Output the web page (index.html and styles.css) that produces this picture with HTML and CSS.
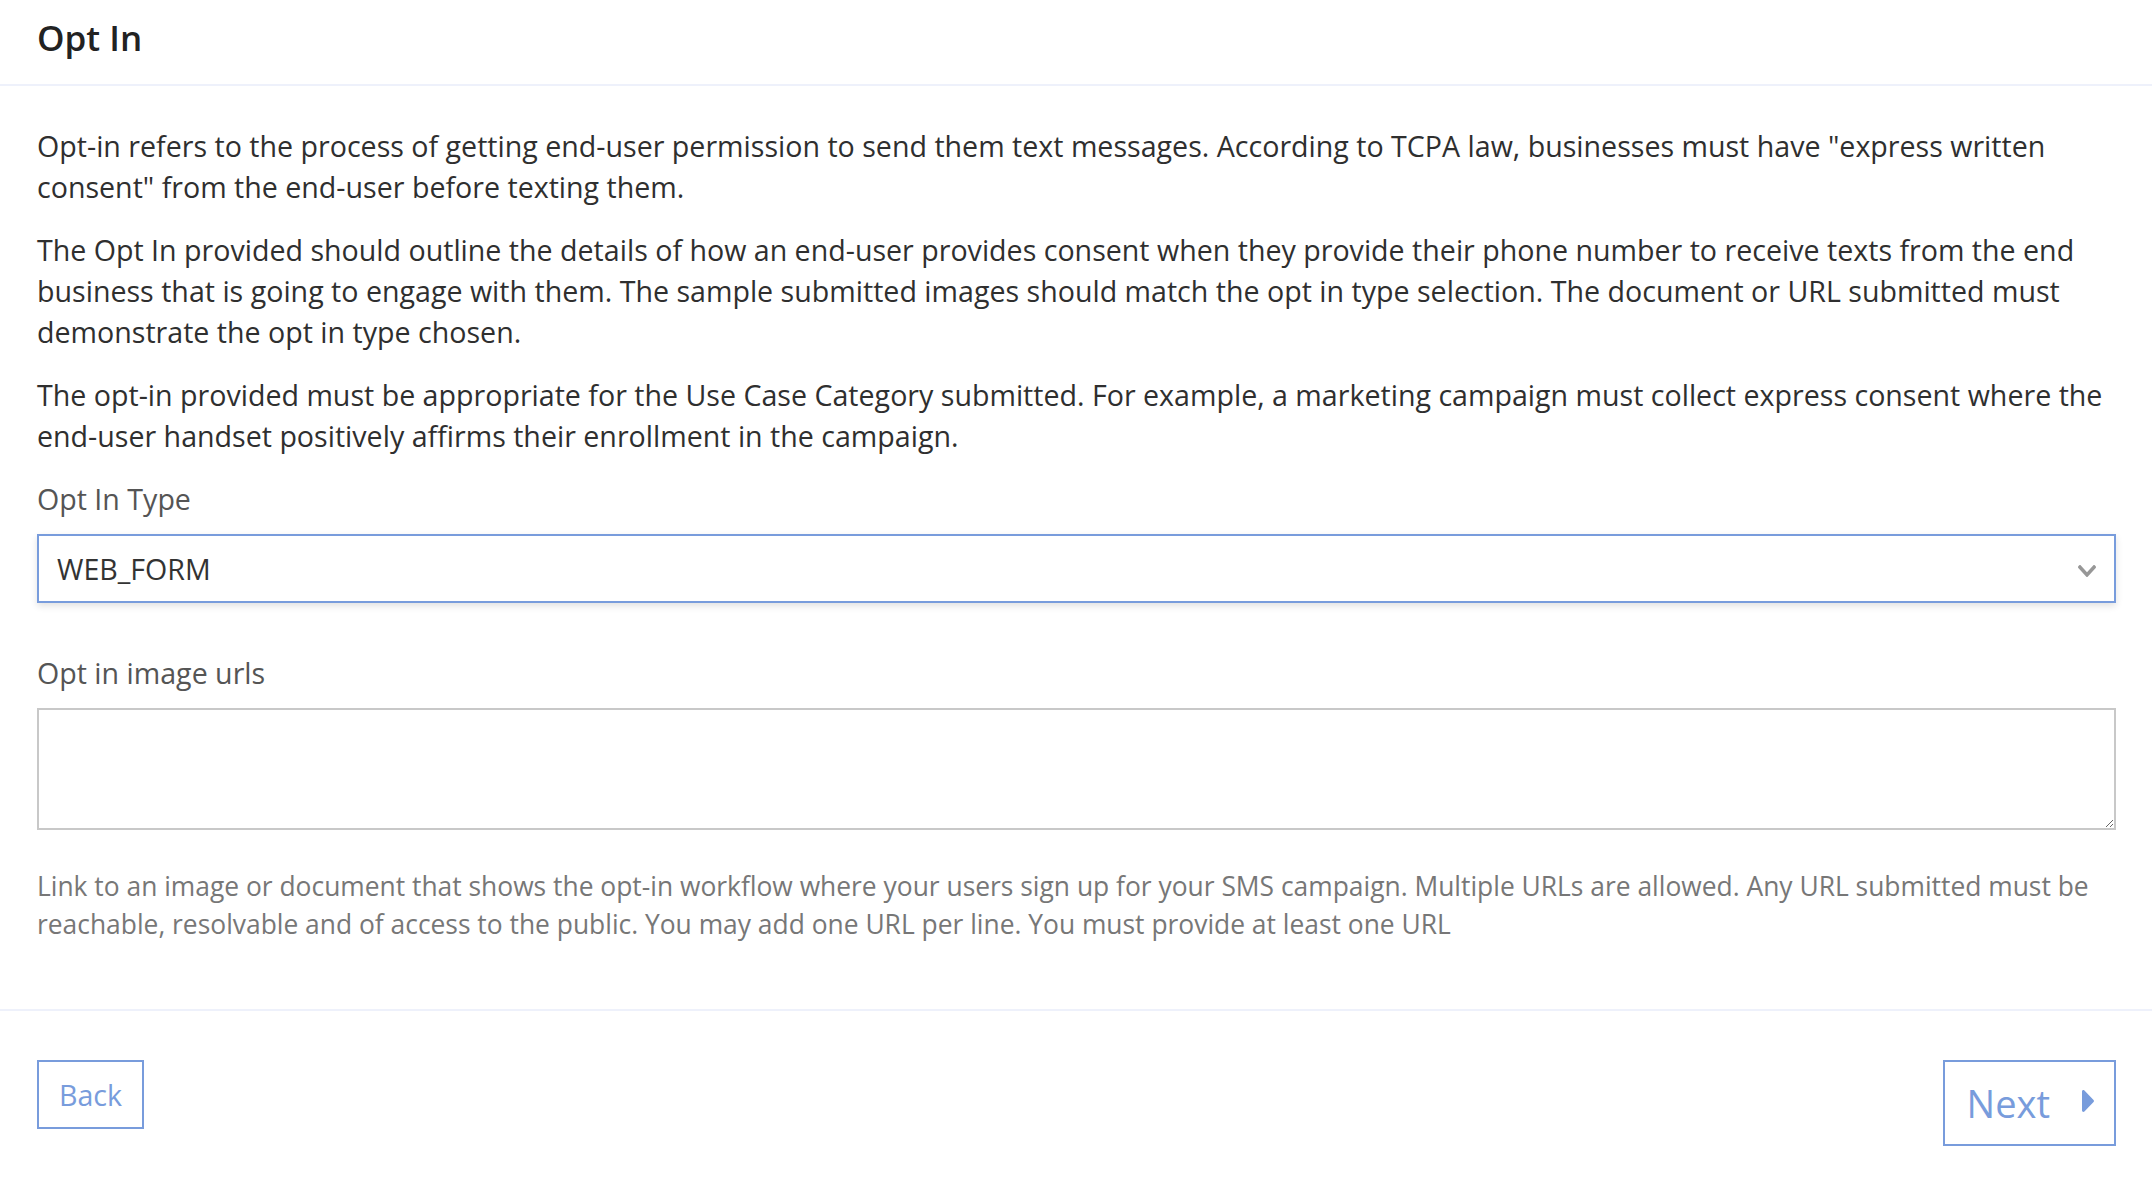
FILE: index.html
```html
<!DOCTYPE html>
<html lang="en">
<head>
<meta charset="utf-8">
<title>Opt In</title>
<link rel="stylesheet" href="styles.css">
</head>
<body>
<div class="page">
  <div class="header">
    <h1 class="title">Opt In</h1>
  </div>
  <div class="content">
    <p class="para">Opt-in refers to the process of getting end-user permission to send them text messages. According to TCPA law, businesses must have "express written consent" from the end-user before texting them.</p>
    <p class="para">The Opt In provided should outline the details of how an end-user provides consent when they provide their phone number to receive texts from the end business that is going to engage with them. The sample submitted images should match the opt in type selection. The document or URL submitted must demonstrate the opt in type chosen.</p>
    <p class="para">The opt-in provided must be appropriate for the Use Case Category submitted. For example, a marketing campaign must collect express consent where the end-user handset positively affirms their enrollment in the campaign.</p>

    <div class="field field-select">
      <label class="label">Opt In Type</label>
      <div class="select" role="combobox" aria-expanded="false">
        <span class="select-value">WEB_FORM</span>
        <svg class="chevron" width="18" height="12" viewBox="5 123 438 266" preserveAspectRatio="none" aria-hidden="true">
          <path fill="#979797" d="M207.029 381.476L12.686 187.132c-9.373-9.373-9.373-24.569 0-33.941l22.667-22.667c9.357-9.357 24.522-9.375 33.901-.04L224 284.505l154.745-154.021c9.379-9.335 24.544-9.317 33.901.04l22.667 22.667c9.373 9.373 9.373 24.569 0 33.941L240.971 381.476c-9.373 9.372-24.569 9.372-33.942 0z"/>
        </svg>
      </div>
    </div>

    <div class="field">
      <label class="label" for="urls">Opt in image urls</label>
      <textarea id="urls" class="textarea"></textarea>
      <p class="help">Link to an image or document that shows the opt-in workflow where your users sign up for your SMS campaign. Multiple URLs are allowed. Any URL submitted must be reachable, resolvable and of access to the public. You may add one URL per line. You must provide at least one URL</p>
    </div>
  </div>
  <div class="footer">
    <button class="btn btn-back" type="button">Back</button>
    <button class="btn btn-next" type="button">
      <span>Next</span>
      <svg class="caret" width="12" height="22" viewBox="0 107 169 298" preserveAspectRatio="none" aria-hidden="true">
        <path fill="#789cdc" d="M0 384.662V127.338c0-17.818 21.543-26.741 34.142-14.142l128.662 128.662c7.81 7.81 7.81 20.474 0 28.284L34.142 398.804C21.543 411.404 0 402.48 0 384.662z"/>
      </svg>
    </button>
  </div>
</div>
</body>
</html>
```

FILE: styles.css
```css
html, body {
  margin: 0;
  padding: 0;
  background: #ffffff;
}

body {
  font-family: "Open Sans", "Noto Sans", "Liberation Sans", sans-serif;
  color: #2f2f2f;
}

.page {
  display: flex;
  flex-direction: column;
}

.header {
  padding: 14px 36px 22px 37px;
  border-bottom: 2px solid #eef1fb;
}

.title {
  margin: 0;
  font-size: 35px;
  line-height: 48px;
  font-weight: 600;
  color: #222222;
}

.content {
  padding: 39px 36px 66px 37px;
}

.para {
  margin: 0 0 22px;
  font-size: 28.6px;
  line-height: 41px;
  color: #2f2f2f;
}

.field {
  display: flex;
  flex-direction: column;
}

.field-select {
  margin-bottom: 49px;
}

.label {
  display: block;
  font-size: 28.6px;
  line-height: 41px;
  color: #555555;
  margin-bottom: 15px;
}

.select {
  box-sizing: border-box;
  height: 69px;
  border: 2px solid #789cdc;
  background: #ffffff;
  box-shadow: 0 3px 7px rgba(0, 0, 0, 0.12);
  display: flex;
  align-items: center;
  justify-content: space-between;
  padding: 0 18px 0 18px;
}

.select-value {
  font-size: 28.6px;
  line-height: 41px;
  color: #333333;
}

.chevron {
  display: block;
  margin-top: 4px;
}

.textarea {
  display: block;
  box-sizing: border-box;
  width: 100%;
  height: 122px;
  margin: 0;
  border: 2px solid #c8c8c8;
  border-radius: 0;
  padding: 12px 18px;
  font-family: inherit;
  font-size: 28.6px;
  line-height: 41px;
  color: #333333;
  resize: vertical;
  outline: none;
}

.help {
  margin: 37px 0 0;
  font-size: 26.4px;
  line-height: 38px;
  color: #777777;
}

.footer {
  display: flex;
  justify-content: space-between;
  align-items: flex-start;
  padding: 49px 36px 0 37px;
  border-top: 2px solid #eef1fb;
}

.btn {
  font-family: inherit;
  background: #ffffff;
  color: #789cdc;
  border: 2px solid #789cdc;
  border-radius: 0;
  margin: 0;
  cursor: pointer;
}

.btn-back {
  font-size: 28.6px;
  line-height: 41px;
  padding: 12px 20px;
}

.btn-next {
  display: flex;
  align-items: center;
  gap: 32px;
  font-size: 38px;
  line-height: 54px;
  padding: 14px 20px 14px 22px;
}

.caret {
  display: block;
  margin-top: -4px;
}
```
